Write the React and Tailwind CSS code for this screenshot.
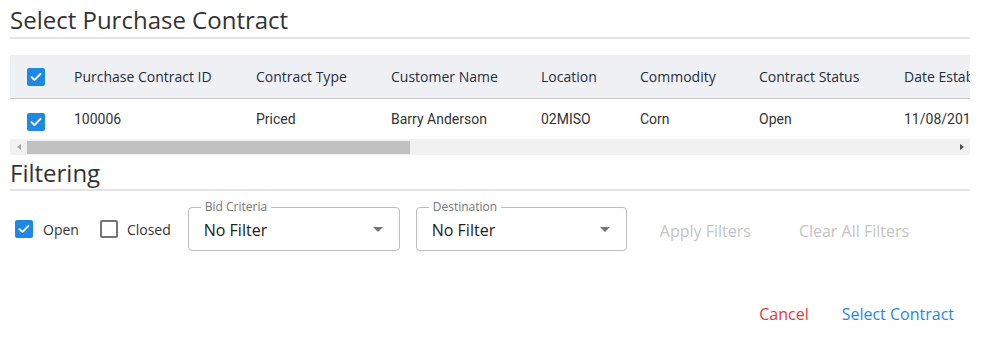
import React from "react";

const OS = { fontFamily: '"Open Sans", "Liberation Sans", sans-serif' };
const RB = { fontFamily: 'Roboto, "Liberation Sans", sans-serif' };

function Check({ checked }) {
  if (checked) {
    return (
      <span className="flex h-[18px] w-[18px] items-center justify-center rounded-[2px] bg-[#1e88e5]">
        <svg width="12" height="10" viewBox="0 0 12 10" fill="none">
          <path d="M1.5 5.2 L4.5 8 L10.5 1.8" stroke="white" strokeWidth="1.8" strokeLinecap="round" strokeLinejoin="round" />
        </svg>
      </span>
    );
  }
  return <span className="block h-[18px] w-[18px] rounded-[2px] border-2 border-[#757575] bg-white" />;
}

function SelectBox({ label, width }) {
  return (
    <div className={`relative flex h-[44px] ${width} items-center justify-between rounded-[4px] border border-[#bdbdbd] pl-[15px] pr-[16px]`}>
      <span className="absolute -top-[8px] left-[12px] bg-white px-[4px] text-[12px] leading-[14px] text-[#757575]" style={OS}>{label}</span>
      <span className="pt-[1px] text-[16px] text-[#212121]" style={OS}>No Filter</span>
      <svg width="10" height="5" viewBox="0 0 10 5"><path d="M0 0 L10 0 L5 5 Z" fill="#757575" /></svg>
    </div>
  );
}

const cols = [
  { h: "Purchase Contract ID", v: "100006", w: "w-[182px]" },
  { h: "Contract Type", v: "Priced", w: "w-[135px]" },
  { h: "Customer Name", v: "Barry Anderson", w: "w-[150px]" },
  { h: "Location", v: "02MISO", w: "w-[99px]" },
  { h: "Commodity", v: "Corn", w: "w-[119px]" },
  { h: "Contract Status", v: "Open", w: "w-[145px]" },
  { h: "Date Established", v: "11/08/2019", w: "w-[160px]" },
];

export default function App() {
  return (
    <div className="h-[347px] w-[989px] overflow-hidden bg-white pl-[10px] pr-[19px]">
      <div className="border-b-2 border-[#e4e4e4] pt-[3px] pb-[1px]">
        <h1 className="text-[24px] leading-[33px] text-[#333333]" style={OS}>Select Purchase Contract</h1>
      </div>

      <div className="mt-[16px] overflow-hidden">
        <div className="flex h-[44px] items-center border-b border-[#c8c8c8] bg-[#eff0f4]">
          <div className="flex w-[64px] shrink-0 pl-[17px]"><Check checked /></div>
          {cols.map((c) => (
            <div key={c.h} className={`${c.w} shrink-0 whitespace-nowrap text-[14px] text-[#1f2d3d]`} style={OS}>{c.h}</div>
          ))}
        </div>
        <div className="flex h-[40px] items-center bg-white">
          <div className="flex w-[64px] shrink-0 pl-[17px] pt-[6px]"><Check checked /></div>
          {cols.map((c) => (
            <div key={c.h} className={`${c.w} shrink-0 whitespace-nowrap text-[14px] text-[#333333]`} style={RB}>{c.v}</div>
          ))}
        </div>
        <div className="flex h-[16px] items-center bg-[#f1f1f1]">
          <div className="flex w-[17px] shrink-0 items-center justify-center">
            <svg width="4" height="6" viewBox="0 0 4 6"><path d="M4 0 L0 3 L4 6 Z" fill="#a3a3a3" /></svg>
          </div>
          <div className="h-[13px] w-[383px] bg-[#c1c1c1]" />
          <div className="flex-1" />
          <div className="flex w-[17px] shrink-0 items-center justify-center">
            <svg width="4" height="6" viewBox="0 0 4 6"><path d="M0 0 L4 3 L0 6 Z" fill="#505050" /></svg>
          </div>
        </div>
      </div>

      <div className="border-b-2 border-[#e4e4e4] pt-[2px] pb-[0px]">
        <h2 className="text-[24px] leading-[32px] text-[#333333]" style={OS}>Filtering</h2>
      </div>

      <div className="mt-[16px] flex items-center">
        <label className="ml-[5px] flex items-center gap-[10px]">
          <Check checked />
          <span className="text-[14px] text-[#333333]" style={OS}>Open</span>
        </label>
        <label className="ml-[21px] flex items-center gap-[9px]">
          <Check />
          <span className="text-[14px] text-[#333333]" style={OS}>Closed</span>
        </label>
        <div className="ml-[17px]"><SelectBox label="Bid Criteria" width="w-[212px]" /></div>
        <div className="ml-[16px]"><SelectBox label="Destination" width="w-[211px]" /></div>
        <span className="ml-[33px] mt-[4px] text-[16px] text-[#c4c4c4]" style={OS}>Apply Filters</span>
        <span className="ml-[48px] mt-[4px] text-[16px] text-[#c4c4c4]" style={OS}>Clear All Filters</span>
      </div>

      <div className="mt-[51px] flex justify-end gap-[33px] pr-[16px]">
        <span className="text-[16px] text-[#e53935]" style={OS}>Cancel</span>
        <span className="text-[16px] text-[#1e88e5]" style={OS}>Select Contract</span>
      </div>
    </div>
  );
}
